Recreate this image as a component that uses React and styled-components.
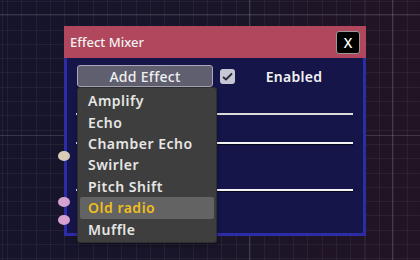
import React from "react";
import styled, { createGlobalStyle } from "styled-components";

const GlobalStyle = createGlobalStyle`
  html, body {
    margin: 0;
    padding: 0;
    background: #17152b;
  }
  body {
    font-family: "Noto Sans", "DejaVu Sans", sans-serif;
  }
`;

const Canvas = styled.div`
  position: relative;
  width: 420px;
  height: 260px;
  overflow: hidden;
  background:
    linear-gradient(90deg, transparent 249px, rgba(255,255,255,0.16) 249px, rgba(255,255,255,0.16) 250px, transparent 250px, transparent 392px, rgba(255,255,255,0.16) 392px, rgba(255,255,255,0.16) 393px, transparent 393px),
    linear-gradient(180deg, transparent 14px, rgba(255,255,255,0.14) 14px, rgba(255,255,255,0.14) 15px, transparent 15px, transparent 135px, rgba(255,255,255,0.14) 135px, rgba(255,255,255,0.14) 136px, transparent 136px),
    repeating-linear-gradient(90deg, rgba(255,255,255,0.05) 0 1px, transparent 1px 14.3px),
    repeating-linear-gradient(180deg, rgba(255,255,255,0.05) 0 1px, transparent 1px 14.3px),
    linear-gradient(90deg, #15142b 0%, #1a1529 50%, #221424 100%);
  background-position: 0 0, 0 0, 7px 0, 0 1px, 0 0;
`;

const Node = styled.div`
  position: absolute;
  left: 64px;
  top: 26px;
  width: 302px;
  display: flex;
  flex-direction: column;
`;

const TitleBar = styled.div`
  height: 32px;
  background: #b0475c;
  display: flex;
  align-items: center;
  justify-content: space-between;
  padding: 0 6px 0 6px;
  color: #f2f2f2;
  font-size: 13px;
  font-weight: 500;
`;

const CloseButton = styled.button`
  width: 24px;
  height: 23px;
  background: #000;
  border: 1px solid #9a9a9a;
  border-radius: 3px;
  color: #fff;
  font-family: "Noto Sans", sans-serif;
  font-size: 14px;
  font-weight: 500;
  padding: 0;
  display: flex;
  align-items: center;
  justify-content: center;
`;

const Body = styled.div`
  position: relative;
  box-sizing: border-box;
  background: #15154a;
  border: 3px solid #2c2ca6;
  border-top: none;
  height: 178px;
  padding: 7px 10px 0 10px;
  display: flex;
  flex-direction: column;
`;

const TopRow = styled.div`
  display: flex;
  align-items: center;
  height: 22px;
`;

const AddButton = styled.button`
  width: 136px;
  height: 22px;
  background: #5f5f70;
  border: 1px solid #a9a9b8;
  border-radius: 3px;
  color: #f0f0f0;
  font-family: "Noto Sans", sans-serif;
  font-size: 14px;
  font-weight: 500;
  letter-spacing: 0.3px;
  padding: 0;
`;

const Check = styled.span`
  width: 15px;
  height: 15px;
  margin-left: 7px;
  border-radius: 3px;
  background: #c8c8d4;
  display: flex;
  align-items: center;
  justify-content: center;
`;

const Label = styled.span`
  flex: 1;
  text-align: center;
  color: #f2f2f2;
  font-size: 14px;
  font-weight: 600;
  letter-spacing: 0.3px;
`;

const Slider = styled.div`
  position: relative;
  height: 2px;
  margin-top: ${(p) => p.$gap}px;
  background: ${(p) => (p.$dim ? "#dcdcdc" : "#f4f4f4")};
  box-shadow: ${(p) => (p.$dim ? "none" : "0 1px 0 #05051a")};

  &::before {
    content: "";
    position: absolute;
    left: -1px;
    top: 0;
    width: 2px;
    height: 2px;
    background: #f4f4f4;
  }
`;

const Port = styled.span`
  position: absolute;
  left: -9px;
  top: ${(p) => p.$y}px;
  width: 12px;
  height: 10px;
  border-radius: 50%;
  background: ${(p) => p.$color};
`;

const Menu = styled.div`
  position: absolute;
  left: 77px;
  top: 87px;
  width: 140px;
  height: 156px;
  box-sizing: border-box;
  padding: 2px 2px;
  background: #3e3e3e;
  border: 1px solid #2e2e2e;
  border-radius: 3px;
  box-shadow: 0 2px 4px rgba(0, 0, 0, 0.35);
  display: flex;
  flex-direction: column;
`;

const Item = styled.div`
  height: 21.7px;
  display: flex;
  align-items: center;
  padding-left: 8px;
  border-radius: 2px;
  font-size: 14px;
  font-weight: 600;
  letter-spacing: 0.5px;
  color: ${(p) => (p.$active ? "#f0be1e" : "#e6e6e6")};
  background: ${(p) => (p.$active ? "#636363" : "transparent")};
`;

const effects = ["Amplify", "Echo", "Chamber Echo", "Swirler", "Pitch Shift", "Old radio", "Muffle"];

export default function App() {
  return (
    <>
      <GlobalStyle />
      <Canvas>
        <Node>
          <TitleBar>
            <span>Effect Mixer</span>
            <CloseButton>X</CloseButton>
          </TitleBar>
          <Body>
            <TopRow>
              <AddButton>Add Effect</AddButton>
              <Check>
                <svg width="11" height="9" viewBox="0 0 11 9">
                  <path d="M1 5 L4 7.5 L10 1.5" fill="none" stroke="#2a2a38" strokeWidth="1.8" />
                </svg>
              </Check>
              <Label>Enabled</Label>
            </TopRow>
            <Slider $gap={26} $dim />
            <Slider $gap={27} />
            <Slider $gap={45} />
            <Port $y={93} $color="#d8ccb6" />
            <Port $y={139} $color="#d6a2d2" />
            <Port $y={157} $color="#d6a2d2" />
          </Body>
        </Node>
        <Menu>
          {effects.map((e) => (
            <Item key={e} $active={e === "Old radio"}>
              {e}
            </Item>
          ))}
        </Menu>
      </Canvas>
    </>
  );
}
